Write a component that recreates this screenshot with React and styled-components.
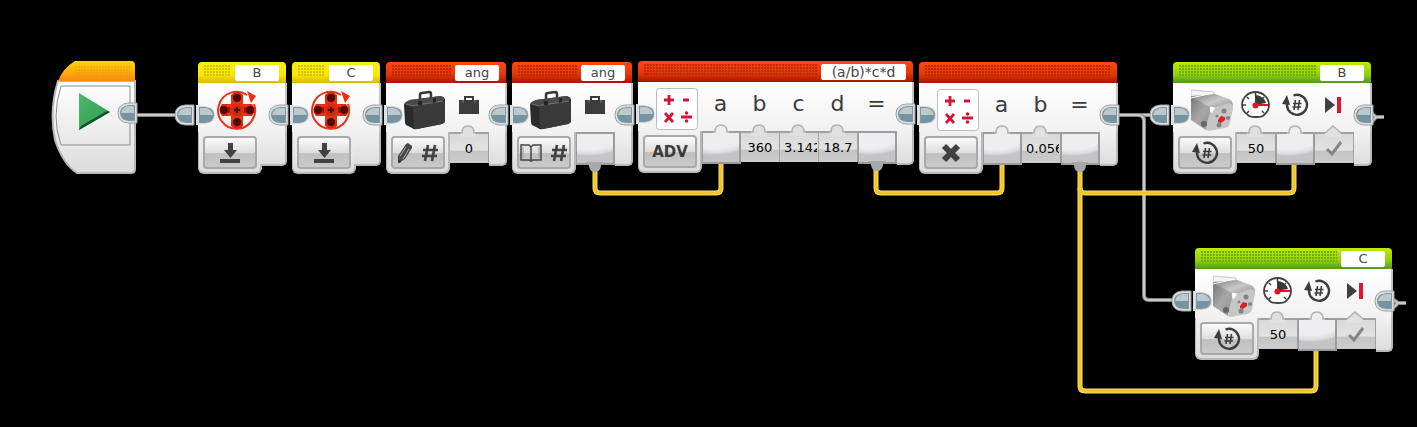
import React from "react";
import styled, { createGlobalStyle, css } from "styled-components";

const GlobalStyle = createGlobalStyle`
  *, *::before, *::after { box-sizing: border-box; }
  body { margin: 0; background: #000; font-family: "DejaVu Sans", Verdana, sans-serif; }
  button, input { font: inherit; margin: 0; }
`;

const palette = {
  yellow: { top: "#f6ee1c", mid: "#fbe800", bottom: "#dcb800", dot: "#d2c000" },
  red: { top: "#ff4a14", mid: "#e23606", bottom: "#a81400", dot: "#bb2a02" },
  green: { top: "#bdec00", mid: "#93cf10", bottom: "#4d9a1c", dot: "#6fae0a" },
};

const Canvas = styled.main`
  position: relative;
  min-height: 100vh;
  overflow: hidden;
`;

const Wires = styled.svg`
  position: absolute;
  inset: 0;
  width: 100%;
  height: 100%;
  overflow: visible;
  fill: none;
`;

const Node = styled.section`
  position: absolute;
  left: ${(p) => p.$x}px;
  top: ${(p) => p.$y}px;
  width: ${(p) => p.$w}px;
`;

const Header = styled.header`
  display: flex;
  align-items: flex-start;
  height: 21px;
  margin-right: 1px;
  padding: 3px 7px 0 6px;
  gap: 4px;
  border-radius: 4px 4px 0 0;
  background: linear-gradient(
    ${(p) => palette[p.$tone].top},
    ${(p) => palette[p.$tone].mid} 60%,
    ${(p) => palette[p.$tone].bottom}
  );
`;

const Grip = styled.div`
  flex: 1;
  height: 12px;
  background: radial-gradient(circle at 1px 1px, ${(p) => palette[p.$tone].dot} 1px, transparent 1px) 0 0 / 3px 3px;
`;

const Tag = styled.button`
  width: ${(p) => (p.$wide ? 85 : 44)}px;
  height: 16px;
  padding: 0;
  border: 0;
  border-radius: 2px;
  background: #fff;
  color: #444;
  font-size: ${(p) => (p.$wide ? 14 : 13)}px;
  line-height: 16px;
`;

const Body = styled.div`
  display: flex;
  align-items: flex-start;
  height: 49px;
  padding: 6px 0 0 18px;
  background: linear-gradient(#fff, #f1f1f1);
  border-right: 2px solid #c4c4c4;
`;

const MainIcon = styled.div`
  display: flex;
  width: 45px;
  height: 43px;
`;

const Head = styled.div`
  display: flex;
  align-items: center;
  justify-content: center;
  width: 39px;
  height: 32px;
  color: #3c3c3c;
  font-size: 22px;
  line-height: 32px;
`;

const Foot = styled.div`
  display: flex;
  align-items: flex-start;
`;

const ModePanel = styled.div`
  width: 64px;
  height: 42px;
  padding: 4px 4px 0;
  border: solid #b9b9b9;
  border-width: 0 2px 2px 1px;
  border-radius: 0 0 6px 6px;
  background: linear-gradient(#f1f1f1, #dcdcdc);
`;

const ModeButton = styled.button`
  display: flex;
  align-items: center;
  justify-content: center;
  gap: 8px;
  width: 54px;
  height: 33px;
  padding: 0;
  border: 2px solid #a9a9a9;
  border-radius: 4px;
  background: linear-gradient(#fafafa, #dedede 50%, #c0c0c0 54%, #cacaca);
  color: #3c3c3c;
  font-size: 15px;
  font-weight: 700;
`;

const Tail = styled.div`
  flex: 1;
  height: 34px;
  border: solid #b9b9b9;
  border-width: 0 2px 2px 0;
  border-radius: 0 0 5px 0;
  background: linear-gradient(#f1f1f1, #dedede);
`;

/* The two foot cells beside a mode panel share its face where no port divides them. */
const WideTail = styled(Tail)`
  margin-left: -2px;
`;

const plug = css`
  height: 33px;
  border: solid #9c9c9f;
  border-width: 2px 2px 2px 1px;
  background: radial-gradient(ellipse 44px 22px at 30% 0, #eeeef0 0 70%, #dcdcde 90%, #c4c4c7 100%);
`;

const field = css`
  height: 31px;
  border: solid #a0a0a0;
  border-width: 2px 1px 0 0;
  background: linear-gradient(#d9d9d9, #e2e2e2 55%, #c4c4c4 60%, #cdcdcd);
`;

const PortBox = styled.div`
  position: relative;
  display: flex;
  align-items: center;
  justify-content: center;
  width: 39px;
  ${(p) => (p.$plug ? plug : field)}
`;

const Bump = styled.svg`
  position: absolute;
  left: 10px;
  top: -9px;
`;

const Knob = styled.svg`
  position: absolute;
  left: 9px;
  bottom: -9px;
`;

const ValueInput = styled.input`
  width: 36px;
  height: 24px;
  padding: 0 0 0 ${(p) => (p.$long ? 3 : 0)}px;
  border: 0;
  background: transparent;
  color: #000;
  font-size: 13px;
  line-height: 24px;
  text-align: ${(p) => (p.$long ? "left" : "center")};
`;

const Socket = styled.svg`
  position: absolute;
  top: 42px;
  ${(p) => (p.$side === "out" ? "right: -2px;" : p.$side === "in" ? "left: -2px;" : "left: -24px;")}
`;

function OutSocket({ side }) {
  return (
    <Socket $side={side} width="21" height="22" viewBox="0 0 21 22" aria-hidden="true">
      <path d="M20 1H11Q1 2 1 11Q1 20 11 21H20Z" fill="#dce0e1" stroke="#9ba1a3" />
      <path d="M18 3H12Q3 4 3 11Q3 18 12 19H18Z" fill="#7f969e" />
      <path d="M17 4H12Q5 5 4 11H17Z" fill="#bccad0" />
      <path d="M17 11H4Q5 17 12 18H17Z" fill="#7593a0" />
    </Socket>
  );
}

function InSocket() {
  return (
    <Socket $side="in" width="20" height="22" viewBox="0 0 20 22" aria-hidden="true">
      <path d="M0 1H3V21H0Z" fill="#dce0e1" />
      <path d="M3 2H9Q19 3 19 11Q19 19 9 20H3Z" fill="#d2d8da" />
      <path d="M3 3H9Q18 4 18 11Q18 18 9 19H3Z" fill="#7f969e" />
      <path d="M4 4H9Q16 5 17 11H4Z" fill="#bccad0" />
      <path d="M4 11H17Q16 17 9 18H4Z" fill="#7593a0" />
    </Socket>
  );
}

const Hash = () => (
  <svg width="18" height="18" viewBox="0 0 18 18">
    <path d="M7 1L4 17M14 1L11 17M2 6H17M1 12H16" fill="none" stroke="#424242" strokeWidth="2.6" />
  </svg>
);

const Pencil = () => (
  <svg width="16" height="20" viewBox="0 0 16 20">
    <path d="M9 1L11 0L15 3V5L8 16L2 20L1 19V13Z" fill="#484848" />
    <path d="M12 6L6 16M9 4L3 13" stroke="#b0b0b0" strokeWidth="1" />
    <path d="M1 18L3 17L4 19L2 20Z" fill="#222" />
  </svg>
);

const Book = () => (
  <svg width="22" height="20" viewBox="0 0 22 20" fill="none" stroke="#474747" strokeWidth="1.5">
    <path d="M1 2H9L11 4L13 2H21V17H13L11 18L9 17H1ZM11 4V19" />
    <path d="M3 4V15M19 4V15" stroke="#999" strokeWidth="1" />
  </svg>
);

const Download = () => (
  <svg width="22" height="22" viewBox="0 0 22 22" fill="#424242">
    <path d="M9 1H14V8H18L11.500 16L5 8H9ZM1 17H21V21H1Z" />
  </svg>
);

const Times = () => (
  <svg width="20" height="20" viewBox="0 0 20 20">
    <path d="M3 3L17 17M17 3L3 17" stroke="#404040" strokeWidth="6" />
  </svg>
);

function Rotations() {
  return (
    <svg width="28" height="26" viewBox="0 0 28 26" fill="none">
      <path d="M12.500 3.500A10 10 0 1 1 6 13V11" stroke="#3c3c3c" strokeWidth="2.400" />
      <path d="M1 12L6 3L9 13Z" fill="#3c3c3c" />
      <path d="M14.500 8L13 18M18.500 8L17 18M12 11.500H20.500M11.500 15H20" stroke="#3c3c3c" strokeWidth="1.600" />
    </svg>
  );
}

const MediumMotor = () => (
  <svg width="42" height="42" viewBox="0 0 42 42">
    <defs>
      <radialGradient id="crossRed">
        <stop offset="0" stopColor="#b81a08" /><stop offset="0.500" stopColor="#f03414" /><stop offset="1" stopColor="#d82008" />
      </radialGradient>
    </defs>
    <path d="M31 6A18.500 18.500 0 1 0 38 15" fill="none" stroke="#e8301c" strokeWidth="2" />
    <path d="M31 2L40 7L35 14Z" fill="#f02b12" />
    <path d="M15 6Q21 0 27 6V15H36Q41 21 36 27H27V37Q21 42 15 37V27H6Q1 21 6 15H15Z" fill="url(#crossRed)" />
    <g fill="#4c0d08">
      <circle cx="21" cy="9" r="4" /><circle cx="21" cy="33" r="4" />
      <circle cx="8" cy="21" r="4" /><circle cx="34" cy="21" r="4" />
      <path d="M20 18H22V20H24V22H22V24H20V22H18V20H20Z" />
    </g>
    <path d="M13 18V24M29 18V24" stroke="#a01608" strokeWidth="2" />
  </svg>
);

const BigCase = () => (
  <svg width="42" height="42" viewBox="0 0 42 42">
    <path d="M16 11V6Q16 4 18 4L25 3Q27 3 27 5V9" fill="none" stroke="#363636" strokeWidth="2.500" />
    <path d="M0 16Q0 14 2 13L6 11L37 7Q41 8 41 11V32Q41 34 38 35L13 40Q10 41 8 39L2 36Q1 35 1 33Z" fill="#2b2b2b" />
    <path d="M1 15Q2 12 6 11L36 7Q40 8 41 11L11 17Q8 16 1 15Z" fill="#4a4a4a" />
    <path d="M9 19Q9 17 12 16L38 12Q41 12 41 14V32Q41 34 38 35L13 40Q10 40 10 38Z" fill="#3a3a3a" />
    <path d="M2 15L9 17Q10 16 13 16L39 12" fill="none" stroke="#777" strokeWidth="1" />
    <path d="M14 12H18V16L14 16ZM29 9H32V13L29 14Z" fill="#222" />
  </svg>
);

const SmallCase = () => (
  <svg width="20" height="20" viewBox="0 0 20 20">
    <path d="M6 6V2H14V6" fill="none" stroke="#3c3c3c" strokeWidth="2" />
    <path d="M0 5H20V19H0Z" fill="#3c3c3c" />
    <path d="M4 5V8M16 5V8" stroke="#777" />
  </svg>
);

const MathIcon = () => (
  <svg width="42" height="42" viewBox="0 0 42 42">
    <rect x=".5" y=".5" width="41" height="41" rx="3" fill="#fff" stroke="#bcbcbc" />
    <path d="M8 12H18M13 7V17M27 12H33M25 29H36M9 25L17 34M17 25L9 34" fill="none" stroke="#cf1738" strokeWidth="2.800" />
    <circle cx="30.500" cy="25" r="1.800" fill="#cf1738" /><circle cx="30.500" cy="33" r="1.800" fill="#cf1738" />
  </svg>
);

const LargeMotor = () => (
  <svg width="43" height="43" viewBox="0 0 43 43">
    <defs>
      <linearGradient id="motorTop" x1="0" y1="0" x2="1" y2="1">
        <stop offset="0" stopColor="#7c7c7c" /><stop offset="0.500" stopColor="#c9c9c9" /><stop offset="1" stopColor="#8c8c8c" />
      </linearGradient>
      <linearGradient id="motorSide" x1="0" y1="0" x2="1" y2="1">
        <stop offset="0" stopColor="#777" /><stop offset="0.500" stopColor="#a8a8a8" /><stop offset="1" stopColor="#8a8a8a" />
      </linearGradient>
    </defs>
    <path d="M0 1L23 3V8L0 8Z" fill="#f4f4f4" stroke="#c4c4c4" strokeWidth="1" />
    <path d="M0 7L24 5L38 10Q42 12 42 17L22 21Z" fill="url(#motorTop)" />
    <path d="M0 7L22 20L15 41L0 31Z" fill="url(#motorSide)" />
    <path d="M22 19L38 14Q42 15 42 19L39 34Q38 38 34 39L18 42Q14 42 15 38L19 23Z" fill="#c6c6c6" />
    <path d="M0 9L22 4" stroke="#fff" strokeWidth="1" />
    <path d="M19 18Q21 17 24 19L21 24Q18 23 19 18Z" fill="#fff" />
    <g fill="#7b8582">
      <circle cx="33" cy="22" r="2.500" /><circle cx="26" cy="27" r="1.500" />
      <circle cx="37" cy="29" r="2" /><circle cx="28" cy="36" r="2.500" />
    </g>
    <circle cx="13" cy="35" r="3" fill="#666" />
    <path d="M27 31L30 27L34 28L34 31L30 34L27 33Z" fill="#dc2028" />
  </svg>
);

const Gauge = () => (
  <svg width="30" height="28" viewBox="0 0 30 28">
    <path d="M7 24Q1 20 1 14A13.500 13 0 0 1 28 14Q28 20 23 24Q22 26 15 26Q8 26 7 24Z" fill="#fff" stroke="#404040" strokeWidth="1.800" />
    <path d="M14.500 2V5M2 14H5M25 14H28M6 6L8 8M23 6L21 8M6 22L8 20M23 22L21 20" stroke="#404040" strokeWidth="1.500" />
    <path d="M14 14V4Q22 4 25 12Z" fill="#393939" />
    <circle cx="14.500" cy="14.500" r="3" fill="#e31324" />
    <path d="M15 14L27 14" stroke="#e31324" strokeWidth="2" />
  </svg>
);

const PlayBar = () => (
  <svg width="20" height="20" viewBox="0 0 20 20">
    <path d="M1 2L11 10L1 18Z" fill="#404040" />
    <path d="M13 2H17V18H13Z" fill="#df1630" />
  </svg>
);

const CheckMark = () => (
  <svg width="18" height="18" viewBox="0 0 18 18">
    <path d="M2 9L7 14L16 2" fill="none" stroke="#858585" strokeWidth="3" />
  </svg>
);

function Port({ port }) {
  const output = port.kind === "output";
  const plugged = output || port.kind === "wired";
  return (
    <PortBox $plug={plugged}>
      {!output && (
        <Bump width="16" height="12" viewBox="0 0 16 12" aria-hidden="true">
          <path
            d={port.kind === "check" ? "M0 8L8 1L16 8V12H0Z" : "M0 8H2Q2 1 8 1Q14 1 14 8H16V12H0Z"}
            fill={plugged ? "#eeeeef" : "#e0e0e0"}
          />
          <path
            d={port.kind === "check" ? "M0 8L8 1L16 8" : "M0 8H2Q2 1 8 1Q14 1 14 8H16"}
            fill="none"
            stroke="#b2b2b2"
            strokeWidth="1.500"
          />
        </Bump>
      )}
      {port.kind === "value" && (
        <ValueInput aria-label={port.name} defaultValue={port.value} $long={port.value.length > 4} />
      )}
      {port.kind === "check" && <CheckMark />}
      {output && (
        <Knob width="18" height="10" viewBox="0 0 18 10" aria-hidden="true">
          <path d="M0 0H18Q15 1 15 4Q14 10 9 10Q4 10 3 4Q3 1 0 0Z" fill="#a9a9ad" />
        </Knob>
      )}
    </PortBox>
  );
}

function Block({ block }) {
  const End = block.ports.length ? Tail : WideTail;
  return (
    <Node $x={block.x} $y={block.y} $w={block.w} aria-label={block.name}>
      <Header $tone={block.tone}>
        <Grip $tone={block.tone} />
        {block.tag && <Tag type="button" $wide={block.tag.length > 4}>{block.tag}</Tag>}
      </Header>
      <Body>
        <MainIcon>{block.icon}</MainIcon>
        {block.ports.map((port) => <Head key={port.name}>{port.head}</Head>)}
      </Body>
      <Foot>
        <ModePanel>
          <ModeButton type="button" aria-label={`${block.name} mode`}>{block.mode}</ModeButton>
        </ModePanel>
        {block.ports.map((port) => <Port key={port.name} port={port} />)}
        <End />
      </Foot>
      {block.lead && <OutSocket side="lead" />}
      <InSocket />
      <OutSocket side="out" />
    </Node>
  );
}

function StartBlock() {
  return (
    <Node $x={51} $y={60} $w={85} aria-label="Start">
      <svg width="86" height="115" viewBox="0 0 86 115">
        <defs>
          <linearGradient id="startHead" x1="0" y1="0" x2="0" y2="1">
            <stop offset="0" stopColor="#ffd60a" /><stop offset="1" stopColor="#ff8614" />
          </linearGradient>
          <linearGradient id="startBody" x1="0" y1="0" x2="0" y2="1">
            <stop offset="0" stopColor="#fff" /><stop offset="1" stopColor="#dcdcdc" />
          </linearGradient>
          <linearGradient id="startPlay" x1="0" y1="0" x2="1" y2="1">
            <stop offset="0" stopColor="#4fb868" /><stop offset="1" stopColor="#2a9a52" />
          </linearGradient>
          <pattern id="startDots" width="3" height="3" patternUnits="userSpaceOnUse">
            <circle cx="1" cy="1" r="0.800" fill="#e09c00" />
          </pattern>
        </defs>
        <path d="M7 21H84V109Q84 113 80 113H26Q12 104 4 80Q-2 50 7 21Z" fill="url(#startBody)" stroke="#b9b9b9" strokeWidth="2" />
        <path d="M24 1H80Q84 1 84 5V21H7Q12 8 24 1Z" fill="url(#startHead)" />
        <rect x="24" y="5" width="55" height="12" fill="url(#startDots)" />
        <path d="M10 26H79V85H10Q0 57 10 26Z" fill="none" stroke="#8e8e8e" />
        <path d="M28 33L59 52L28 70Z" fill="url(#startPlay)" />
        <path d="M28 70L59 52L56 51L30 66Z" fill="#124f28" />
      </svg>
      <OutSocket side="out" />
    </Node>
  );
}

const wired = (name, head) => ({ kind: "wired", name, head });
const output = (name, head) => ({ kind: "output", name, head });
const value = (name, head, text) => ({ kind: "value", name, head, value: text });

const motorPorts = [
  value("Power", <Gauge />, "50"),
  wired("Rotations", <Rotations />),
  { kind: "check", name: "Brake at end", head: <PlayBar /> },
];

const blocks = [
  { name: "Medium motor B", tone: "yellow", tag: "B", x: 198, y: 62, w: 89, lead: true, icon: <MediumMotor />, mode: <Download />, ports: [] },
  { name: "Medium motor C", tone: "yellow", tag: "C", x: 292, y: 62, w: 89, icon: <MediumMotor />, mode: <Download />, ports: [] },
  { name: "Write variable", tone: "red", tag: "ang", x: 386, y: 62, w: 121, icon: <BigCase />, mode: <><Pencil /><Hash /></>, ports: [value("Value", <SmallCase />, "0")] },
  { name: "Read variable", tone: "red", tag: "ang", x: 512, y: 62, w: 121, icon: <BigCase />, mode: <><Book /><Hash /></>, ports: [output("Value", <SmallCase />)] },
  {
    name: "Advanced math", tone: "red", tag: "(a/b)*c*d", x: 638, y: 61, w: 276, icon: <MathIcon />, mode: "ADV",
    ports: [wired("a", "a"), value("b", "b", "360"), value("c", "c", "3.142"), value("d", "d", "18.7"), output("Result", "=")],
  },
  {
    name: "Multiply", tone: "red", x: 919, y: 62, w: 199, icon: <MathIcon />, mode: <Times />,
    ports: [wired("a", "a"), value("b", "b", "0.056"), output("Result", "=")],
  },
  { name: "Large motor B", tone: "green", tag: "B", x: 1173, y: 62, w: 199, lead: true, icon: <LargeMotor />, mode: <Rotations />, ports: motorPorts },
  { name: "Large motor C", tone: "green", tag: "C", x: 1195, y: 248, w: 198, lead: true, icon: <LargeMotor />, mode: <Rotations />, ports: motorPorts },
];

const dataWires = [
  "M595 168V188Q595 193 600 193H716Q721 193 721 188V163",
  "M876 168V188Q876 193 881 193H997Q1002 193 1002 188V163",
  "M1080 168V386Q1080 391 1085 391H1311Q1316 391 1316 386V350",
  "M1080 188Q1080 193 1085 193H1289Q1294 193 1294 188V164",
];

const flowWires = [
  "M136 115H176",
  "M1118 115H1152",
  "M1138 115Q1144 115 1144 121V295Q1144 300 1149 300H1173",
  "M1370 112L1376 117H1384M1370 124L1376 117",
  "M1391 298L1398 303H1406M1391 310L1398 303",
];

export default function App() {
  return (
    <>
      <GlobalStyle />
      <Canvas>
        <Wires aria-hidden="true">
          {flowWires.map((d) => (
            <g key={d}>
              <path d={d} stroke="#858585" strokeWidth="4" />
              <path d={d} stroke="#c9c9c9" strokeWidth="2" />
            </g>
          ))}
          {dataWires.map((d) => <path key={d} d={d} stroke="#f4dc84" strokeWidth="5" />)}
          {dataWires.map((d) => <path key={d} d={d} stroke="#f5c61c" strokeWidth="3" />)}
        </Wires>
        <StartBlock />
        {blocks.map((block) => <Block key={block.name} block={block} />)}
      </Canvas>
    </>
  );
}
